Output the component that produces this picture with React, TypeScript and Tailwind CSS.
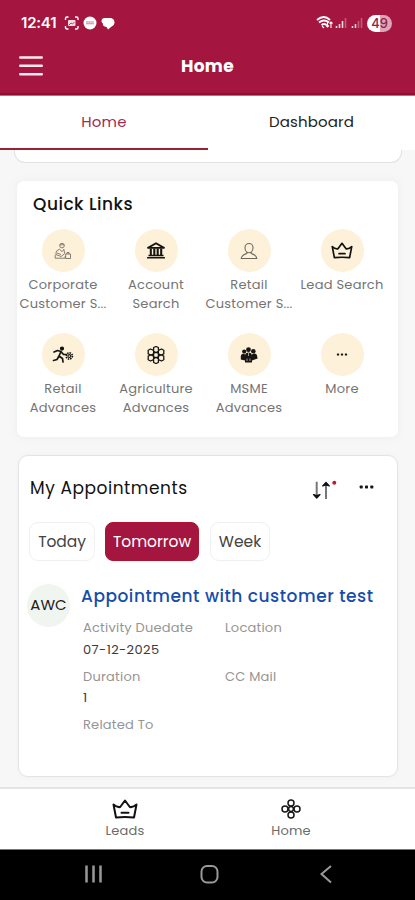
import type { ReactNode } from "react";

function Crown({ className }: { className: string }) {
  return (
    <svg viewBox="0 0 26 20" className={className} fill="none" stroke="#111" strokeWidth="2" strokeLinejoin="round" strokeLinecap="round">
      <path d="M4 18.500 1.500 5.500Q5 8.700 8.200 8L13 1.500l4.800 6.500q3.200.7 6.700-2.500L22 18.500Q13 17.500 4 18.500Z" />
      <path d="M9.500 13.800h7" />
    </svg>
  );
}

function Corporate() {
  return (
    <svg viewBox="0 0 18 18" className="size-[18px]" fill="none" stroke="#777164" strokeWidth="0.9">
      <circle cx="8" cy="3.600" r="2.300" />
      <path d="M5.700 2.800h4.600M5.500 7.200 2.500 9l-.7 3.500 5.400 2 3.600-3-1-4M5.500 7.200l2.600 2.500 2-2.500M1.200 13v3.200h10V14M3 11l4 1.500M11.700 12h4.800v4.500h-4.800zM13 12v-1.500h2V12" />
    </svg>
  );
}

function Bank() {
  return (
    <svg viewBox="0 0 20 18" className="h-[17px] w-5" fill="none" stroke="#171512">
      <path d="M1.500 6.200 10 1.300 18.500 6.200Z" strokeWidth="1.900" strokeLinejoin="round" />
      <path d="M4.500 7v7M8.200 7v7M11.800 7v7M15.500 7v7" strokeWidth="2.200" />
      <path d="M2 14.300h16M.5 16.700h19" strokeWidth="1.600" />
    </svg>
  );
}

function Person() {
  return (
    <svg viewBox="0 0 18 18" className="size-[18px]" fill="none" stroke="#6d675b" strokeWidth="1.100">
      <path d="M5 5.500a4 4 0 0 1 8 0c0 3-1.700 5.300-4 5.300S5 8.500 5 5.500ZM6.800 10v1.500C4 12.500 1.500 12.800 1.200 16.500h15.600c-.3-3.700-2.800-4-5.600-5V10" />
    </svg>
  );
}

function Runner() {
  return (
    <svg viewBox="0 0 22 18" className="h-[18px] w-[22px]" fill="none" stroke="#171512" strokeWidth="1.700" strokeLinecap="round" strokeLinejoin="round">
      <circle cx="10" cy="2.600" r="1.300" fill="#171512" />
      <path d="M2 6l3.500-1.500L9 5.500 7 10l3.500 2.500L11 16M7 10l-2 3.500-3.500 1M9 5.500l2.500 3h3" />
      <circle cx="17.300" cy="10" r="3.100" strokeWidth="1.700" strokeDasharray="1.500 .9" strokeLinecap="butt" />
      <circle cx="17.300" cy="10" r="1.400" strokeWidth="1.100" />
    </svg>
  );
}

function Honeycomb() {
  return (
    <svg viewBox="0 0 18 18" className="size-[18px]" fill="none" stroke="#171512" strokeWidth="1.300" strokeLinejoin="round">
      <path d="m6.600 1.500 2.400-1 2.400 1v3.800L9 6.500 6.600 5.300ZM6.600 7.200 9 6.500l2.400.7v3.600L9 11.500l-2.400-.7ZM6.600 12.700 9 11.500l2.400 1.200v3.800l-2.400 1-2.400-1ZM1.200 4.300 3.500 3l3.100 1.300v3.600L3.800 9 1.200 7.900ZM11.400 4.300 14.500 3l2.300 1.300v3.600L14.200 9l-2.800-1.100ZM1.200 10.100 3.800 9l2.800 1.100v3.600L3.500 15l-2.300-1.300ZM11.400 10.100 14.200 9l2.600 1.100v3.600L14.500 15l-3.100-1.300Z" />
    </svg>
  );
}

function Team() {
  return (
    <svg viewBox="0 0 18 16" className="h-4 w-[18px]" fill="#171512">
      <circle cx="8.500" cy="2.700" r="2.400" />
      <circle cx="4.200" cy="4.600" r="2.100" />
      <circle cx="13.300" cy="4.200" r="2.300" />
      <path d="M5 15.500V8.500c0-4 7-4 7 0v7ZM.8 12.500V9.500C1 6.500 3.500 6 5 7.500v6ZM12 13.500V7.500c2-2 4.700-1 5 1l.6 3Z" />
      <path d="M8.500 6v3M7 11.500v2.500M10 11.500v2.500" stroke="#fdf1da" strokeWidth=".6" />
    </svg>
  );
}

function Dots({ className }: { className: string }) {
  return (
    <svg viewBox="0 0 14 4" className={className} fill="#171717">
      <rect x=".2" y=".6" width="3" height="2.800" rx=".7" />
      <rect x="5.500" y=".6" width="3" height="2.800" rx=".7" />
      <rect x="10.800" y=".6" width="3" height="2.800" rx=".7" />
    </svg>
  );
}

function QuickLink({ icon, lines }: { icon: ReactNode; lines: string[] }) {
  return (
    <div className="flex h-[104px] w-[93px] flex-col items-center">
      <div className="flex size-[43px] items-center justify-center rounded-full bg-[#fef1da]">{icon}</div>
      <div className="mt-1 text-center text-[13px] leading-[18.5px] tracking-[0.25px] whitespace-nowrap text-[#747474]">
        {lines.map((l) => (
          <div key={l}>{l}</div>
        ))}
      </div>
    </div>
  );
}

function Field({ label, value }: { label: string; value?: string }) {
  return (
    <div className="h-[48.5px] text-[13px] whitespace-nowrap">
      <div className="h-[21.5px] leading-5 tracking-[0.22px] text-[#959595]">{label}</div>
      <div className="leading-5 tracking-[0.4px] text-[#3b3b3b]">{value}</div>
    </div>
  );
}

function StatusBar() {
  return (
    <div className="flex h-[46px] items-center pr-[23px] pl-[21px] text-white">
      <span className="w-[37px] font-['Inter',sans-serif] text-[15px] leading-5 font-semibold tracking-[-0.2px]">12:41</span>
      <svg viewBox="0 0 52 16" className="ml-[6px] h-4 w-[52px]" fill="none" stroke="#fff" strokeWidth="1.400">
        <path d="M1.500 5V3.500Q1.500 2 3 2h1.500M11 2h1.500Q14 2 14 3.500V5M14 11v1.500q0 1.500-1.500 1.500H11M4.500 14H3q-1.500 0-1.500-1.500V11" />
        <rect x="4" y="5" width="7.500" height="6" rx="1" fill="#f6dce4" stroke="none" />
        <path d="m5 10 2-2 1.500 1 2-2" stroke="#a51940" strokeWidth=".8" />
        <circle cx="26" cy="8" r="6.500" fill="#fff" stroke="none" />
        <path d="M22.300 7h7.400M22.300 8.800h7.400" stroke="#bd587a" strokeWidth="1.100" strokeDasharray="1.500 .5" />
        <path d="M37.500 6c0-2.500 2-3.500 4-3h4c3.500 0 5 2 5 4.500s-1.500 3-3.500 4.500l-3 2.500-1.500-2.500c-3-.5-4-1.500-3.500-3.500Q37.500 8 37.500 6Z" fill="#fff" stroke="none" />
      </svg>
      <svg viewBox="0 0 50 16" className="ml-auto h-4 w-[50px]" fill="none" stroke="#fff">
        <path d="M1 5q7-6 13 0M3 7.500q5-4 10 0M5.500 10q2.500-2 5 0" strokeWidth="1.900" />
        <path d="m6 11 2 2M11.500 6v6m-1.500-1.500 1.500 1.500 1.500-1.500M15 13V7m-1.500 1.500L15 7l1.500 1.500" strokeWidth="1.100" />
        <path d="M20.500 13v-2M23.500 13V9M26.500 13V6" strokeWidth="1.600" opacity=".85" />
        <path d="M29.500 13V3M42.500 13V6M45.500 13V3" strokeWidth="1.600" opacity=".3" />
        <path d="M36.500 13v-2M39.500 13V9" strokeWidth="1.600" opacity=".8" />
      </svg>
      <span className="ml-[1px] flex h-[17px] w-[25px] items-center justify-center rounded-full bg-linear-to-r from-white from-50% to-[#dfa5b7] to-50% font-['Inter',sans-serif] text-[13px] leading-none font-medium text-[#8e2446]">49</span>
    </div>
  );
}

const links = [
  { icon: <Corporate />, lines: ["Corporate", "Customer S..."] },
  { icon: <Bank />, lines: ["Account", "Search"] },
  { icon: <Person />, lines: ["Retail", "Customer S..."] },
  { icon: <Crown className="h-[17px] w-[22px]" />, lines: ["Lead Search"] },
  { icon: <Runner />, lines: ["Retail", "Advances"] },
  { icon: <Honeycomb />, lines: ["Agriculture", "Advances"] },
  { icon: <Team />, lines: ["MSME", "Advances"] },
  { icon: <Dots className="h-[3px] w-3" />, lines: ["More"] },
];

export default function App() {
  return (
    <div className="flex h-[900px] w-[415px] flex-col overflow-hidden bg-[#f7f7f7] font-['Poppins','Inter',sans-serif] text-[#111]">
      <header className="h-24 shrink-0 border-b border-[#d4626b] bg-[#a4163f]">
        <StatusBar />
        <div className="flex h-[49px] items-start border-b-2 border-[#930d30] pl-[19px]">
          <svg viewBox="0 0 24 20" className="mt-[10px] h-5 w-6" stroke="#ffeaf1" strokeWidth="2.600" strokeLinecap="round">
            <path d="M1.300 1.500h21.400M1.300 9.800h21.400M1.300 18.200h21.400" />
          </svg>
          <h1 className="mt-2 ml-[138px] text-[17px] leading-6 font-bold tracking-[0.3px] text-white">Home</h1>
        </div>
      </header>

      <nav className="flex h-[54px] shrink-0 bg-white text-center text-[15px]">
        <div className="w-[208px] border-b-2 border-[#97242f] leading-[51px] tracking-[0.2px] text-[#a32b50]">Home</div>
        <div className="w-[207px] leading-[51px] tracking-[0.15px] text-[#222]">Dashboard</div>
      </nav>

      <main className="h-[637px] shrink-0">
        <div className="ml-[14px] h-[13px] w-[388px] rounded-b-[11px] border border-t-0 border-[#e1e2e3] bg-white" />

        <section className="mt-[18px] ml-[17px] h-[256px] w-[381px] rounded-[7px] bg-white shadow-[0_0_7px_2px_#eff0f0]">
          <h2 className="pt-[11px] pl-4 text-[17px] leading-6 font-medium tracking-[0.5px]">Quick Links</h2>
          <div className="mt-[13px] -ml-[0.5px] flex flex-wrap">
            {links.map((l) => (
              <QuickLink key={l.lines.join(" ")} {...l} />
            ))}
          </div>
        </section>

        <section className="mt-[18px] ml-[18px] h-[322px] w-[380px] rounded-[10px] border border-[#e4e4e4] bg-white shadow-[0_0_4px_#f0f0f0]">
          <div className="flex h-[66px] items-center pl-[11px]">
            <h2 className="-mt-[3px] w-[282px] text-[17px] leading-6 tracking-[0.55px]">My Appointments</h2>
            <svg viewBox="0 0 26 22" className="h-[22px] w-[26px]" fill="none">
              <path d="M4.700 3.700V17M14 21V7" stroke="#777" strokeWidth="2" />
              <path d="m1.500 16.500 3.200 3.700L8 16.500l-3.300 1ZM10.700 8 14 4.300 17.300 8 14 7Z" fill="#111" stroke="#111" strokeWidth="1.200" strokeLinejoin="round" />
              <circle cx="22.300" cy="4.800" r="2" fill="#b5203a" />
            </svg>
            <Dots className="-mt-[4px] ml-[21px] h-1 w-[15px]" />
          </div>
          <div className="ml-[10px] flex gap-[10px] text-[15.5px]">
            <button className="h-[39px] w-[66px] rounded-[9px] border border-[#f0f0f0] tracking-[-0.05px] text-[#444]">Today</button>
            <button className="h-[39px] w-[94px] rounded-[8px] border border-[#b3122e] bg-[#a4163f] tracking-[-0.02px] text-white">Tomorrow</button>
            <button className="ml-[1px] h-[39px] w-[60px] rounded-[9px] border border-[#f0f0f0] text-[#444]">Week</button>
          </div>
          <div className="mt-[23px] flex">
            <div className="ml-2 flex size-[43px] items-center justify-center rounded-full bg-[#f0f5f0] text-[15px] text-[#222]">AWC</div>
            <div className="ml-[11px]">
              <h3 className="text-[17px] leading-6 font-medium tracking-[0.53px] whitespace-nowrap text-[#174daa]">Appointment with customer test</h3>
              <div className="mt-[10px] ml-[2px] grid grid-cols-[142px_100px]">
                <Field label="Activity Duedate" value="07-12-2025" />
                <Field label="Location" />
                <Field label="Duration" value="1" />
                <Field label="CC Mail" />
                <Field label="Related To" />
              </div>
            </div>
          </div>
        </section>
      </main>

      <footer className="flex h-[62px] shrink-0 border-t-2 border-[#e4e4e4] bg-white pt-[10px] pl-[42px] text-[13px] leading-5 tracking-[0.2px] text-[#6b6b6b]">
        <div className="flex w-[166px] flex-col items-center">
          <Crown className="h-5 w-[26px]" />
          <span className="mt-[2px]">Leads</span>
        </div>
        <div className="flex w-[166px] flex-col items-center">
          <svg viewBox="0 0 20 20" className="size-5" fill="none" stroke="#171717" strokeWidth="1.500">
            <circle cx="10" cy="4" r="3" />
            <circle cx="4" cy="10" r="3" />
            <circle cx="16" cy="10" r="3" />
            <circle cx="10" cy="16" r="3" />
            <circle cx="10" cy="10" r="2.400" />
          </svg>
          <span className="mt-[2px]">Home</span>
        </div>
      </footer>
      <div className="h-[51px] shrink-0 border-t border-[#777] bg-black">
        <svg viewBox="0 0 415 50" className="h-[50px] w-[415px]" fill="none" stroke="#999">
          <path d="M86.500 15.500v17M93.500 15.500v17M100.500 15.500v17" strokeWidth="2.500" />
          <rect x="201.500" y="16" width="16" height="16.500" rx="5.500" strokeWidth="2" />
          <path d="m331 16-9.500 8L331 32.500" strokeWidth="2" />
        </svg>
      </div>
    </div>
  );
}
